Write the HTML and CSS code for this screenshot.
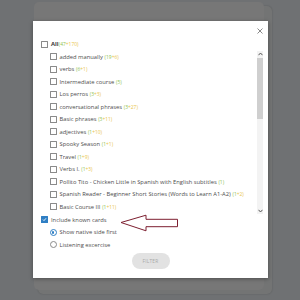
FILE: index.html
```html
<!DOCTYPE html>
<html>
<head>
<meta charset="utf-8">
<link rel="stylesheet" href="styles.css">
</head>
<body>
<div class="backdrop">
  <div class="bg-card bg-card-back"></div>
  <div class="bg-card"></div>
</div>
<div class="modal">
  <div class="close">
    <svg width="6" height="6" viewBox="0 0 6 6"><path d="M0.5 0.5L5.5 5.5M5.5 0.5L0.5 5.5" stroke="#6a6a6a" stroke-width="0.8" fill="none"/></svg>
  </div>
  <div class="row row-top"><span class="cb"></span><span class="label bold">All</span><span class="cnt"><span class="g">(47</span><span class="y">+170)</span></span></div>
  <div class="listwrap">
    <div class="list">
      <div class="row"><span class="cb"></span><span class="label">added manually</span><span class="cnt"><span class="g">(19</span><span class="y">+6)</span></span></div>
      <div class="row"><span class="cb"></span><span class="label">verbs</span><span class="cnt"><span class="g">(6</span><span class="y">+1)</span></span></div>
      <div class="row"><span class="cb"></span><span class="label">Intermediate course</span><span class="cnt"><span class="g">(5)</span></span></div>
      <div class="row"><span class="cb"></span><span class="label">Los perros</span><span class="cnt"><span class="g">(3</span><span class="y">+3)</span></span></div>
      <div class="row"><span class="cb"></span><span class="label">conversational phrases</span><span class="cnt"><span class="g">(3</span><span class="y">+27)</span></span></div>
      <div class="row"><span class="cb"></span><span class="label">Basic phrases</span><span class="cnt"><span class="g">(3</span><span class="y">+11)</span></span></div>
      <div class="row"><span class="cb"></span><span class="label">adjectives</span><span class="cnt"><span class="g">(1</span><span class="y">+10)</span></span></div>
      <div class="row"><span class="cb"></span><span class="label">Spooky Season</span><span class="cnt"><span class="g">(1</span><span class="y">+1)</span></span></div>
      <div class="row"><span class="cb"></span><span class="label">Travel</span><span class="cnt"><span class="g">(1</span><span class="y">+9)</span></span></div>
      <div class="row"><span class="cb"></span><span class="label">Verbs I.</span><span class="cnt"><span class="g">(1</span><span class="y">+3)</span></span></div>
      <div class="row"><span class="cb"></span><span class="label">Pollito Tito - Chicken Little in Spanish with English subtitles</span><span class="cnt"><span class="g">(1)</span></span></div>
      <div class="row"><span class="cb"></span><span class="label">Spanish Reader - Beginner Short Stories (Words to Learn A1-A2)</span><span class="cnt"><span class="g">(1</span><span class="y">+2)</span></span></div>
      <div class="row"><span class="cb"></span><span class="label">Basic Course III</span><span class="cnt"><span class="g">(1</span><span class="y">+11)</span></span></div>
    </div>
    <div class="scrollbar">
      <div class="sb-arrow">
        <svg width="5" height="4" viewBox="0 0 5 4"><path d="M0.5 3.2L2.5 1L4.5 3.2" stroke="#555" stroke-width="1" fill="none"/></svg>
      </div>
      <div class="sb-track"><div class="sb-thumb"></div></div>
      <div class="sb-arrow">
        <svg width="5" height="4" viewBox="0 0 5 4"><path d="M0.5 0.8L2.5 3L4.5 0.8" stroke="#555" stroke-width="1" fill="none"/></svg>
      </div>
    </div>
  </div>
  <div class="row row-top"><span class="cb checked"><svg width="5" height="5" viewBox="0 0 5 5"><path d="M1 2.6L2 3.6L4 1.3" stroke="#fff" stroke-width="0.9" fill="none"/></svg></span><span class="label">Include known cards</span></div>
  <div class="row"><span class="radio on"></span><span class="label">Show native side first</span></div>
  <div class="row"><span class="radio"></span><span class="label">Listening excercise</span></div>
  <div class="actions"><button class="filter">FILTER</button></div>
  <svg class="arrow" width="62" height="20" viewBox="0 0 62 20"><path d="M1 8.5L26 1.2V5.3H57.5V12.7H26V16.8Z" fill="none" stroke="#7d1f30" stroke-width="1"/></svg>
</div>
</body>
</html>
```
FILE: styles.css
```css
html, body {
  margin: 0;
  padding: 0;
}
body {
  width: 300px;
  height: 300px;
  background: #6f7173;
  font-family: "Open Sans", "Noto Sans", sans-serif;
  color: #4a4a4a;
  overflow: hidden;
  position: relative;
}
.backdrop {
  position: absolute;
  inset: 0;
}
.bg-card {
  position: absolute;
  left: 34px;
  top: 2px;
  width: 230px;
  height: 288px;
  background: #777777;
  border-radius: 5px;
}
.bg-card-back {
  left: 38px;
  top: 6px;
  width: 234px;
  background: #737474;
  box-shadow: 0 0 2px rgba(0,0,0,0.2);
}
.modal {
  position: absolute;
  left: 33px;
  top: 21px;
  width: 235px;
  height: 257px;
  background: #fff;
  box-shadow: 0 1px 4px rgba(0,0,0,0.35);
  box-sizing: border-box;
  padding: 17px 0 0 8px;
  display: flex;
  flex-direction: column;
}
.close {
  position: absolute;
  right: 5px;
  top: 7px;
  width: 6px;
  height: 6px;
  display: flex;
}
.row {
  height: 12.5px;
  display: flex;
  align-items: center;
  gap: 2.5px;
  white-space: nowrap;
  padding-left: 8.5px;
  font-size: 5.8px;
}
.row-top {
  padding-left: 0;
}
.cb {
  width: 5px;
  height: 5px;
  border: 0.6px solid #8a8a8a;
  border-radius: 0.5px;
  flex: none;
  box-sizing: content-box;
  display: flex;
  align-items: center;
  justify-content: center;
  margin-right: 0.5px;
}
.cb.checked {
  background: #2f7fc4;
  border-color: #2f7fc4;
}
.radio {
  width: 5px;
  height: 5px;
  border: 0.7px solid #8a8a8a;
  border-radius: 50%;
  flex: none;
  box-sizing: content-box;
  position: relative;
  margin-right: 0.5px;
}
.radio.on {
  border-color: #2f7fc4;
}
.radio.on::after {
  content: "";
  position: absolute;
  left: 1.1px;
  top: 1.1px;
  width: 2.8px;
  height: 2.8px;
  border-radius: 50%;
  background: #2f7fc4;
}
.label {
  color: #4d4d4d;
}
.bold {
  font-weight: 700;
  color: #3a3a3a;
}
.cnt {
  font-size: 4.9px;
  margin-left: -0.8px;
  padding-top: 0.4px;
}
.row-top .cnt {
  margin-left: -2.3px;
}
.g {
  color: #8cc152;
}
.y {
  color: #e9c44a;
}
.listwrap {
  display: flex;
  height: 163px;
  margin-right: 5px;
}
.list {
  flex: 1;
  overflow: hidden;
}
.scrollbar {
  width: 6px;
  display: flex;
  flex-direction: column;
  background: #f3f3f3;
  margin-top: 0;
}
.sb-arrow {
  height: 6px;
  display: flex;
  align-items: center;
  justify-content: center;
}
.sb-track {
  flex: 1;
  padding-top: 1px;
}
.sb-thumb {
  height: 61px;
  background: #cfcfcf;
}
.actions {
  display: flex;
  justify-content: center;
  padding-right: 8px;
  margin-top: 1.5px;
}
.filter {
  width: 38px;
  height: 16px;
  border: none;
  border-radius: 8px;
  background: #e2e2e2;
  color: #a8a8a8;
  font-family: "Open Sans", "Noto Sans", sans-serif;
  font-size: 4.8px;
  letter-spacing: 0.2px;
  padding: 0;
}
.arrow {
  position: absolute;
  left: 87px;
  top: 193px;
}
```
